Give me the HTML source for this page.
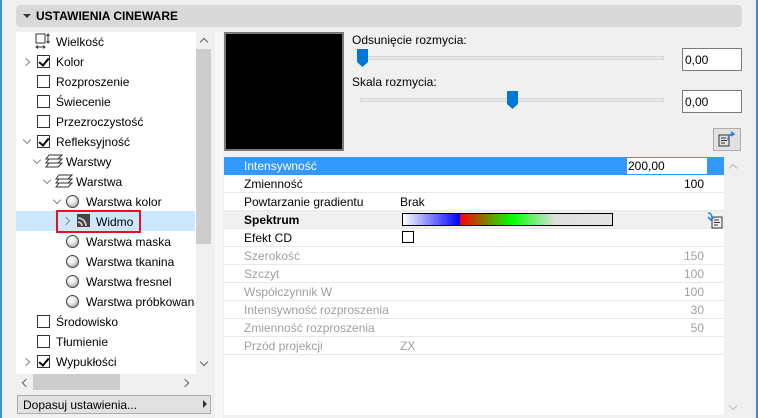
<!DOCTYPE html>
<html><head><meta charset="utf-8"><style>
*{margin:0;padding:0;box-sizing:border-box}
body{width:758px;height:418px;background:#f0f0f0;font-family:"Liberation Sans",sans-serif;font-size:12px;color:#000;position:relative;overflow:hidden}
.a{position:absolute}
.t{position:absolute;white-space:nowrap;line-height:14px}
.cb{position:absolute;width:13px;height:13px;border:1px solid #333;background:#fff}
.chk::after{content:"";position:absolute;left:3px;top:0px;width:4px;height:8px;border:solid #000;border-width:0 2px 2px 0;transform:rotate(40deg)}
.chev{position:absolute;width:6px;height:6px;border:solid #888;border-width:0 1.5px 1.5px 0}
.cr{transform:rotate(-45deg)}
.cd{transform:rotate(45deg)}
.sph{position:absolute;width:13px;height:13px;border-radius:50%;border:1px solid #444;background:radial-gradient(circle at 40% 35%,#fff 0,#eee 35%,#888 100%)}
.row{position:absolute;left:224px;width:500px;height:18px;border-bottom:1px solid #e8e8e8;background:#fff}
.row span{position:absolute;top:2px;line-height:14px;white-space:nowrap}
.g{color:#a0a0a0}
</style></head><body>
<div class="a" style="left:0;top:0;width:2px;height:418px;background:#3c8ddc"></div>
<div class="a" style="left:756px;top:0;width:2px;height:418px;background:#3c8ddc"></div>
<div class="a" style="left:16px;top:5px;width:726px;height:22px;background:#d9d9d9;border-radius:4px"></div>
<div class="a" style="left:23px;top:14px;width:0;height:0;border-left:4px solid transparent;border-right:4px solid transparent;border-top:4px solid #333"></div>
<div class="t" style="left:36px;top:9px;font-weight:bold;font-size:12px">USTAWIENIA CINEWARE</div>

<div class="a" style="left:16px;top:32px;width:180px;height:342px;background:#fff"></div>
<div class="a" style="left:16px;top:211px;width:179px;height:20px;background:#cce8ff"></div>
<div class="a" style="left:56px;top:210px;width:85px;height:23px;border:2px solid #e81123"></div>
<div class="a" style="left:196px;top:32px;width:16px;height:342px;background:#f0f0f0"></div>
<div class="a" style="left:196px;top:49px;width:15px;height:195px;background:#cdcdcd"></div>
<div class="chev" style="left:201px;top:39px;transform:rotate(-135deg);border-color:#606060"></div>
<div class="chev cd" style="left:201px;top:359px;border-color:#606060"></div>
<div class="a" style="left:16px;top:374px;width:180px;height:16px;background:#f0f0f0"></div>
<div class="a" style="left:33px;top:374px;width:87px;height:16px;background:#cdcdcd"></div>
<div class="chev" style="left:23px;top:380px;transform:rotate(135deg);border-color:#606060"></div>
<div class="chev cr" style="left:182px;top:380px;border-color:#606060"></div>
<div class="a" style="left:17px;top:395px;width:194px;height:19px;background:#e1e1e1;border:1px solid #adadad"></div>
<div class="t" style="left:23px;top:398px">Dopasuj ustawienia...</div>
<div class="a" style="left:203px;top:400px;border-top:4px solid transparent;border-bottom:4px solid transparent;border-left:4px solid #333"></div>

<svg class="a" style="left:35px;top:33px" width="16" height="17"><rect x="1" y="1" width="9" height="9" fill="none" stroke="#333"/><path d="M13 1v9M11.5 3l1.5-2 1.5 2M11.5 8l1.5 2 1.5-2M1 14h9M3 12.5 1 14l2 1.5M8 12.5l2 1.5-2 1.5" stroke="#333" fill="none"/></svg>
<div class="t" style="left:56px;top:35px">Wielkość</div>
<div class="chev cr" style="left:23px;top:59px"></div><div class="cb chk" style="left:37px;top:55px"></div><div class="t" style="left:56px;top:55px">Kolor</div>
<div class="cb" style="left:37px;top:75px"></div><div class="t" style="left:56px;top:75px">Rozproszenie</div>
<div class="cb" style="left:37px;top:95px"></div><div class="t" style="left:56px;top:95px">Świecenie</div>
<div class="cb" style="left:37px;top:115px"></div><div class="t" style="left:56px;top:115px">Przezroczystość</div>
<div class="chev cd" style="left:24px;top:137px"></div><div class="cb chk" style="left:37px;top:135px"></div><div class="t" style="left:56px;top:135px">Refleksyjność</div>
<div class="chev cd" style="left:34px;top:157px"></div>
<svg class="a" style="left:45px;top:154px" width="18" height="15"><path d="M4 1h13l-4 4H1z M4 5h13l-4 4H1z M4 9h13l-4 4H1z" fill="none" stroke="#333"/></svg>
<div class="t" style="left:66px;top:155px">Warstwy</div>
<div class="chev cd" style="left:44px;top:177px"></div>
<svg class="a" style="left:55px;top:174px" width="18" height="15"><path d="M4 1h13l-4 4H1z M4 5h13l-4 4H1z M4 9h13l-4 4H1z" fill="none" stroke="#333"/></svg>
<div class="t" style="left:76px;top:175px">Warstwa</div>
<div class="chev cd" style="left:54px;top:197px"></div><div class="sph" style="left:66px;top:195px"></div><div class="t" style="left:86px;top:195px">Warstwa kolor</div>
<div class="chev cr" style="left:63px;top:218px"></div>
<svg class="a" style="left:77px;top:214px" width="13" height="13"><rect width="13" height="13" fill="#444"/><path d="M1 4a8 8 0 0 1 8 8M1 8a4 4 0 0 1 4 4" stroke="#ddd" stroke-width="1.6" fill="none"/></svg>
<div class="t" style="left:96px;top:215px">Widmo</div>
<div class="sph" style="left:66px;top:235px"></div><div class="t" style="left:86px;top:235px">Warstwa maska</div>
<div class="sph" style="left:66px;top:255px"></div><div class="t" style="left:86px;top:255px">Warstwa tkanina</div>
<div class="sph" style="left:66px;top:275px"></div><div class="t" style="left:86px;top:275px">Warstwa fresnel</div>
<div class="sph" style="left:66px;top:295px"></div><div class="t" style="left:86px;top:295px;width:109px;overflow:hidden">Warstwa próbkowana</div>
<div class="cb" style="left:37px;top:315px"></div><div class="t" style="left:56px;top:315px">Środowisko</div>
<div class="cb" style="left:37px;top:335px"></div><div class="t" style="left:56px;top:335px">Tłumienie</div>
<div class="chev cr" style="left:23px;top:359px"></div><div class="cb chk" style="left:37px;top:355px"></div><div class="t" style="left:56px;top:355px">Wypukłości</div>

<div class="a" style="left:215px;top:32px;width:8px;height:386px;background:#f7f7f7"></div>
<div class="a" style="left:224px;top:32px;width:120px;height:119px;background:#000;border:2px solid #7a7a7a"></div>
<div class="t" style="left:352px;top:33px">Odsunięcie rozmycia:</div>
<div class="a" style="left:360px;top:56px;width:304px;height:4px;background:#e7e7e7;border:1px solid #d6d6d6"></div>
<svg class="a" style="left:357px;top:49px" width="11" height="18"><path d="M0 0h11v13l-5.5 5L0 13z" fill="#0078d7"/></svg>
<div class="t" style="left:352px;top:75px">Skala rozmycia:</div>
<div class="a" style="left:360px;top:98px;width:304px;height:4px;background:#e7e7e7;border:1px solid #d6d6d6"></div>
<svg class="a" style="left:507px;top:91px" width="11" height="18"><path d="M0 0h11v13l-5.5 5L0 13z" fill="#0078d7"/></svg>
<div class="a" style="left:682px;top:48px;width:60px;height:23px;background:#fff;border:1px solid #7a7a7a"></div>
<div class="t" style="left:685px;top:53px">0,00</div>
<div class="a" style="left:682px;top:90px;width:60px;height:23px;background:#fff;border:1px solid #7a7a7a"></div>
<div class="t" style="left:685px;top:95px">0,00</div>
<div class="a" style="left:713px;top:128px;width:28px;height:23px;background:#e1e1e1;border:1px solid #adadad"></div>
<svg class="a" style="left:718px;top:131px" width="20" height="17"><path d="M1 4h10v11H1zM3 7h5M3 9.5h6M3 12h4" stroke="#333" fill="none"/><path d="M10 9c0-4 2-6 5-6M13 1l3 2-3 2" stroke="#2b7de9" stroke-width="1.6" fill="none"/></svg>

<div class="a" style="left:224px;top:157px;width:500px;height:258px;background:#fff"></div>
<div class="row" style="top:157px;background:#3399ff;border:none"><span style="left:20px;color:#fff">Intensywność</span></div>
<div class="a" style="left:627px;top:158px;width:80px;height:16px;background:#fff"></div>
<div class="t" style="left:628px;top:159px">200,00</div>
<div class="row" style="top:175px"><span style="left:20px">Zmienność</span><span style="right:20px">100</span></div>
<div class="row" style="top:193px"><span style="left:20px">Powtarzanie gradientu</span><span style="left:176px">Brak</span></div>
<div class="row" style="top:211px;background:#f0f0f0"><span style="left:20px;font-weight:bold">Spektrum</span></div>
<div class="a" style="left:402px;top:213px;width:211px;height:13px;border:1px solid #000;background:linear-gradient(90deg,#fff 0,#00f 27%,#f00 27.5%,#0f0 52%,#dfdfdf 73%,#e4e4e4 100%)"></div>
<svg class="a" style="left:706px;top:211px" width="18" height="18"><path d="M6 6h10v11H6zM8 9h5M8 11.5h6M8 14h4" stroke="#333" fill="none"/><path d="M2 2c3 0 4 2 4 6M2 6l3 3 3-3" stroke="#2b7de9" stroke-width="1.6" fill="none"/></svg>
<div class="row" style="top:229px"><span style="left:20px">Efekt CD</span></div>
<div class="a" style="left:402px;top:231px;width:12px;height:12px;border:1px solid #000;background:#fff"></div>
<div class="row" style="top:247px"><span class="g" style="left:20px">Szerokość</span><span class="g" style="right:20px">150</span></div>
<div class="row" style="top:265px"><span class="g" style="left:20px">Szczyt</span><span class="g" style="right:20px">100</span></div>
<div class="row" style="top:283px"><span class="g" style="left:20px">Współczynnik W</span><span class="g" style="right:20px">100</span></div>
<div class="row" style="top:301px"><span class="g" style="left:20px">Intensywność rozproszenia</span><span class="g" style="right:20px">30</span></div>
<div class="row" style="top:319px"><span class="g" style="left:20px">Zmienność rozproszenia</span><span class="g" style="right:20px">50</span></div>
<div class="row" style="top:337px"><span class="g" style="left:20px">Przód projekcji</span><span class="g" style="left:176px">ZX</span></div>
<div class="a" style="left:724px;top:157px;width:18px;height:258px;background:#f0f0f0"></div>
<div class="chev" style="left:730px;top:165px;transform:rotate(-135deg);border-color:#bbb"></div>
<div class="chev cd" style="left:730px;top:403px;border-color:#bbb"></div>
</body></html>
